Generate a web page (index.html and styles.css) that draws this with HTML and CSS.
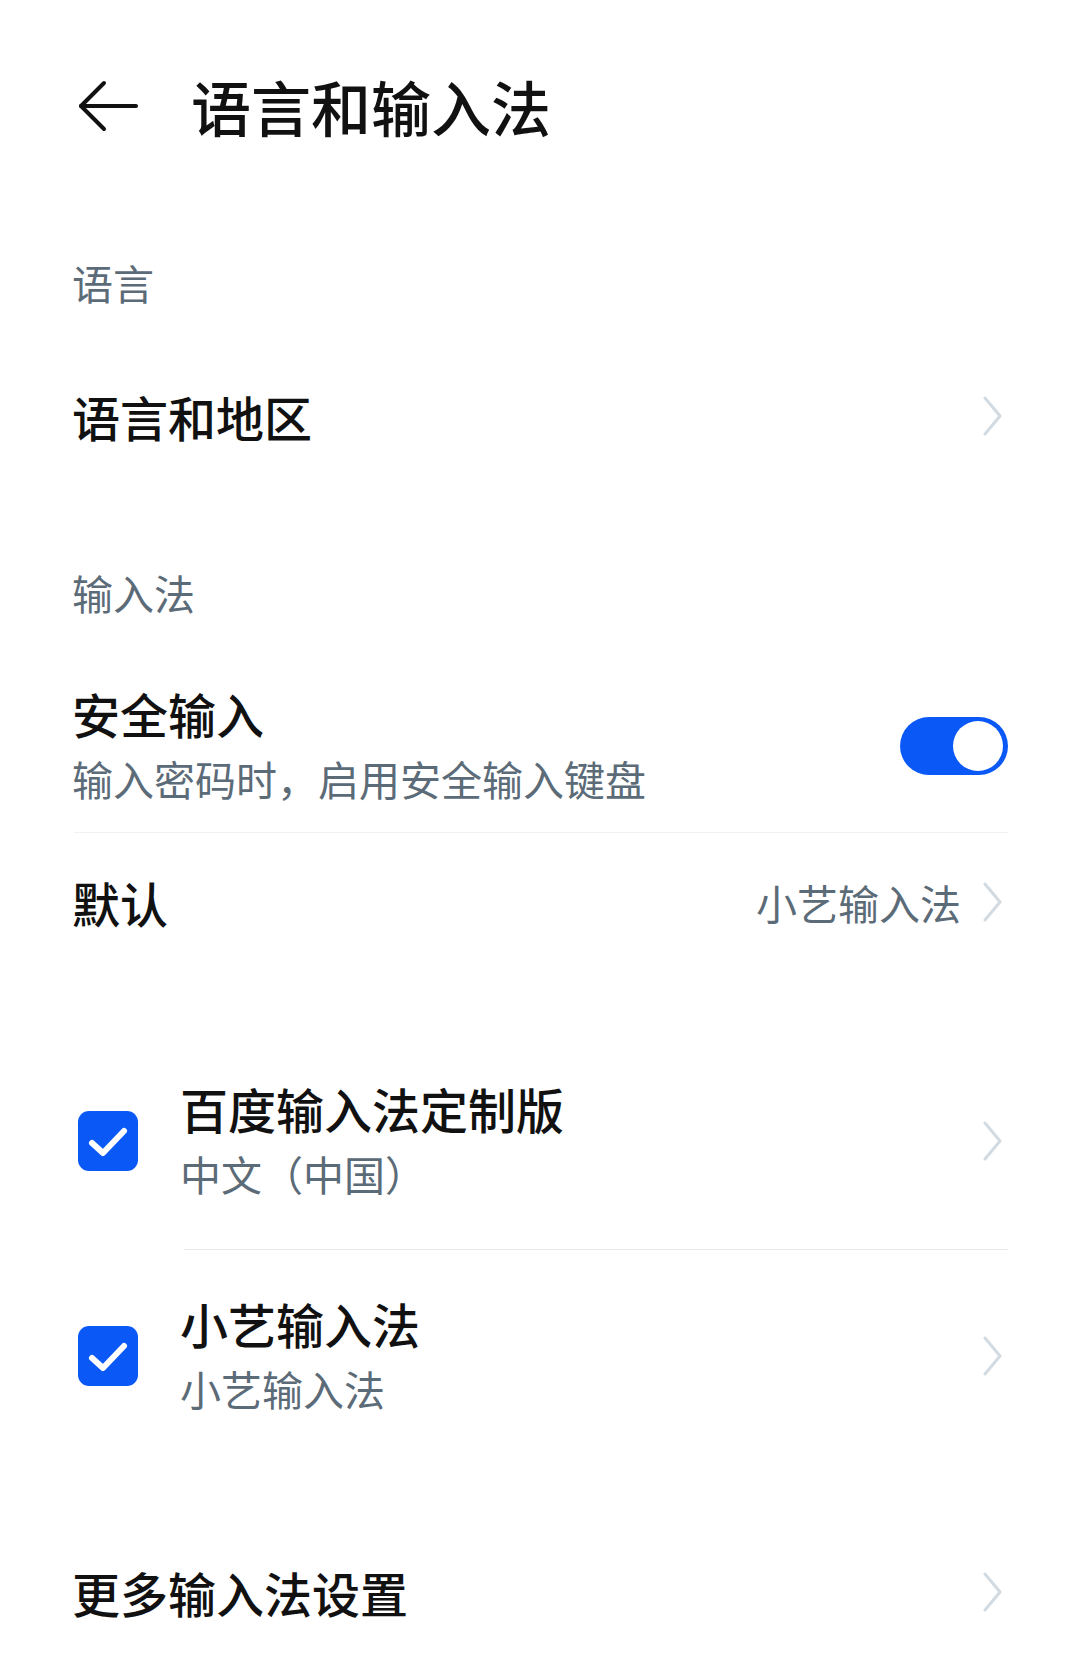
FILE: index.html
```html
<!DOCTYPE html>
<html lang="zh-CN">
<head>
  <meta charset="UTF-8">
  <meta name="viewport" content="width=device-width, initial-scale=1.0">
  <title>语言和输入法</title>
  <link rel="stylesheet" href="styles.css">
</head>
<body>
<div class="page">
  <header class="header">
    <svg class="back" width="64" height="64" viewBox="0 0 64 64">
      <polyline points="27,9 4,32 27,55" />
      <line x1="4" y1="32" x2="59" y2="32" />
    </svg>
    <h1 class="header-title">语言和输入法</h1>
  </header>

  <div class="group-label group-label--first">语言</div>
  <div class="row row--single">
    <span class="row-title">语言和地区</span>
    <svg class="chevron" width="24" height="40" viewBox="0 0 24 40"><polyline points="3,2 18,20 3,38" /></svg>
  </div>

  <div class="group-label">输入法</div>
  <div class="row row--switch">
    <div class="row-text">
      <div class="row-title">安全输入</div>
      <div class="row-sub">输入密码时，启用安全输入键盘</div>
    </div>
    <div class="switch switch--on"><span class="switch-knob"></span></div>
  </div>
  <div class="row row--value">
    <span class="row-title">默认</span>
    <span class="row-value">小艺输入法</span>
    <svg class="chevron" width="24" height="40" viewBox="0 0 24 40"><polyline points="3,2 18,20 3,38" /></svg>
  </div>

  <div class="ime-list">
    <div class="row row--check">
      <span class="checkbox">
        <svg width="60" height="60" viewBox="0 0 60 60"><polyline points="14,32 25,42 46,20" /></svg>
      </span>
      <div class="row-text">
        <div class="row-title">百度输入法定制版</div>
        <div class="row-sub">中文（中国）</div>
      </div>
      <svg class="chevron" width="24" height="40" viewBox="0 0 24 40"><polyline points="3,2 18,20 3,38" /></svg>
    </div>
    <div class="row row--check">
      <span class="checkbox">
        <svg width="60" height="60" viewBox="0 0 60 60"><polyline points="14,32 25,42 46,20" /></svg>
      </span>
      <div class="row-text">
        <div class="row-title">小艺输入法</div>
        <div class="row-sub">小艺输入法</div>
      </div>
      <svg class="chevron" width="24" height="40" viewBox="0 0 24 40"><polyline points="3,2 18,20 3,38" /></svg>
    </div>
  </div>

  <div class="row row--single row--more">
    <span class="row-title">更多输入法设置</span>
    <svg class="chevron" width="24" height="40" viewBox="0 0 24 40"><polyline points="3,2 18,20 3,38" /></svg>
  </div>
</div>
</body>
</html>
```

FILE: styles.css
```css
html,
body {
  margin: 0;
  overflow: hidden;
  background-color: #fff;
}

body {
  font-family: "Noto Sans CJK SC", "Noto Sans", sans-serif;
  color: #111;
}

.page {
  width: 1080px;
}

.header {
  display: flex;
  align-items: center;
  height: 64px;
  padding: 74px 72px 0 77px;
}

.back {
  flex: none;
  fill: none;
  stroke: #111;
  stroke-width: 4;
  stroke-linecap: round;
  stroke-linejoin: round;
}

.header-title {
  margin: 0 0 0 50px;
  font-size: 60px;
  font-weight: 500;
  line-height: 64px;
}

.group-label {
  padding: 82px 72px 40px;
  font-size: 41px;
  line-height: 56px;
  color: #5c6b78;
}

.group-label--first {
  padding-top: 116px;
}

.row {
  display: flex;
  align-items: center;
  padding: 0 72px;
}

.row-title {
  font-size: 48px;
  font-weight: 500;
  line-height: 64px;
}

.row-sub {
  font-size: 41px;
  line-height: 66px;
  color: #5c6b78;
}

.row-text {
  flex: 1;
}

.row--single,
.row--value {
  min-height: 132px;
}

.row--single .row-title,
.row--value .row-title {
  flex: 1;
}

.row--value {
  min-height: 137px;
}

.row-value {
  margin-right: 21px;
  font-size: 41px;
  line-height: 56px;
  color: #5c6b78;
}

.row--switch {
  padding-top: 21px;
  padding-bottom: 22px;
  position: relative;
}

.row--switch::after {
  content: "";
  position: absolute;
  left: 74px;
  right: 72px;
  bottom: 0;
  height: 1px;
  background-color: #eff1f3;
}

.chevron {
  flex: none;
  margin-right: 2px;
  fill: none;
  stroke: #d2dae2;
  stroke-width: 3;
  stroke-linecap: round;
  stroke-linejoin: round;
}

.switch {
  flex: none;
  width: 108px;
  height: 58px;
  border-radius: 29px;
  background-color: #d8dde2;
  position: relative;
}

.switch--on {
  background-color: #0a59f7;
}

.switch-knob {
  position: absolute;
  top: 4px;
  right: 5px;
  width: 50px;
  height: 50px;
  border-radius: 50%;
  background-color: #fff;
}

.ime-list {
  padding-top: 64px;
}

.row--check {
  padding-top: 42px;
  padding-bottom: 42px;
  position: relative;
}

.row--check + .row--check::before {
  content: "";
  position: absolute;
  left: 184px;
  right: 72px;
  top: 0;
  height: 1px;
  background-color: #e6e9ec;
}

.row--check + .row--check {
  border-top: 1px solid transparent;
}

.checkbox {
  flex: none;
  width: 60px;
  height: 60px;
  margin: 0 42px 0 6px;
  border-radius: 11px;
  background-color: #0a59f7;
}

.checkbox svg {
  display: block;
  fill: none;
  stroke: #fff;
  stroke-width: 6;
  stroke-linecap: round;
  stroke-linejoin: round;
}

.row--more {
  margin-top: 63px;
}
```
